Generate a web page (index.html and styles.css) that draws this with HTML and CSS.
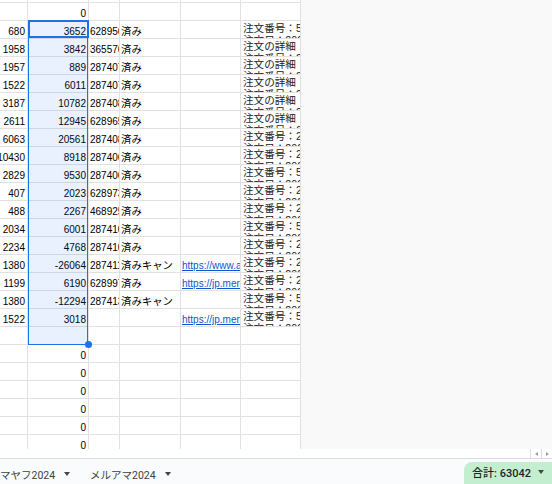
FILE: index.html
```html
<!DOCTYPE html>
<html lang="ja">
<head>
<meta charset="utf-8">
<title>Sheet</title>
<link rel="stylesheet" href="styles.css">
</head>
<body>
<div class="app">
  <div class="sheet">
    <div class="grid">
      <div class="row top"><div class="c"></div><div class="c"></div><div class="c"></div><div class="c"></div><div class="c"></div><div class="c"></div></div>
      <div class="row"><div class="c n"></div><div class="c n">0</div><div class="c"></div><div class="c"></div><div class="c"></div><div class="c"></div></div>
      <div class="row"><div class="c n">680</div><div class="c n">3652</div><div class="c t">6289560184</div><div class="c t j">済み</div><div class="c"></div><div class="c w">注文番号：5102<br>注文日：2024/01</div></div>
      <div class="row"><div class="c n">1958</div><div class="c n">3842</div><div class="c t">3655761203</div><div class="c t j">済み</div><div class="c"></div><div class="c w">注文の詳細<br>注文番号：2874</div></div>
      <div class="row"><div class="c n">1957</div><div class="c n">889</div><div class="c t">2874071156</div><div class="c t j">済み</div><div class="c"></div><div class="c w">注文の詳細<br>注文番号：2874</div></div>
      <div class="row"><div class="c n">1522</div><div class="c n">6011</div><div class="c t">2874072290</div><div class="c t j">済み</div><div class="c"></div><div class="c w">注文の詳細<br>注文番号：2874</div></div>
      <div class="row"><div class="c n">3187</div><div class="c n">10782</div><div class="c t">2874083301</div><div class="c t j">済み</div><div class="c"></div><div class="c w">注文の詳細<br>注文番号：2874</div></div>
      <div class="row"><div class="c n">2611</div><div class="c n">12945</div><div class="c t">6289654410</div><div class="c t j">済み</div><div class="c"></div><div class="c w">注文の詳細<br>注文番号：6289</div></div>
      <div class="row"><div class="c n">6063</div><div class="c n">20561</div><div class="c t">2874085512</div><div class="c t j">済み</div><div class="c"></div><div class="c w">注文番号：2874<br>注文日：2024/02</div></div>
      <div class="row"><div class="c n">10430</div><div class="c n">8918</div><div class="c t">2874066623</div><div class="c t j">済み</div><div class="c"></div><div class="c w">注文番号：2874<br>注文日：2024/02</div></div>
      <div class="row"><div class="c n">2829</div><div class="c n">9530</div><div class="c t">2874067734</div><div class="c t j">済み</div><div class="c"></div><div class="c w">注文番号：5102<br>注文日：2024/02</div></div>
      <div class="row"><div class="c n">407</div><div class="c n">2023</div><div class="c t">6289738845</div><div class="c t j">済み</div><div class="c"></div><div class="c w">注文番号：2874<br>注文日：2024/03</div></div>
      <div class="row"><div class="c n">488</div><div class="c n">2267</div><div class="c t">4689259956</div><div class="c t j">済み</div><div class="c"></div><div class="c w">注文番号：2874<br>注文日：2024/03</div></div>
      <div class="row"><div class="c n">2034</div><div class="c n">6001</div><div class="c t">2874101067</div><div class="c t j">済み</div><div class="c"></div><div class="c w">注文番号：5102<br>注文日：2024/03</div></div>
      <div class="row"><div class="c n">2234</div><div class="c n">4768</div><div class="c t">2874102178</div><div class="c t j">済み</div><div class="c"></div><div class="c w">注文番号：2874<br>注文日：2024/04</div></div>
      <div class="row"><div class="c n">1380</div><div class="c n">-26064</div><div class="c t">2874113289</div><div class="c t j wrap">済みキャンセル</div><div class="c t"><span class="link">https://www.amazon.co.jp</span></div><div class="c w">注文番号：2874<br>注文日：2024/04</div></div>
      <div class="row"><div class="c n">1199</div><div class="c n">6190</div><div class="c t">6289974390</div><div class="c t j">済み</div><div class="c t"><span class="link">https://jp.mercari.com</span></div><div class="c w">注文番号：2874<br>注文日：2024/04</div></div>
      <div class="row"><div class="c n">1380</div><div class="c n">-12294</div><div class="c t">2874135401</div><div class="c t j wrap">済みキャンセル</div><div class="c"></div><div class="c w">注文番号：5102<br>注文日：2024/05</div></div>
      <div class="row"><div class="c n">1522</div><div class="c n">3018</div><div class="c"></div><div class="c"></div><div class="c t"><span class="link">https://jp.mercari.com</span></div><div class="c w">注文番号：5102<br>注文日：2024/05</div></div>
      <div class="row"><div class="c"></div><div class="c"></div><div class="c"></div><div class="c"></div><div class="c"></div><div class="c"></div></div>
      <div class="row"><div class="c"></div><div class="c n">0</div><div class="c"></div><div class="c"></div><div class="c"></div><div class="c"></div></div>
      <div class="row"><div class="c"></div><div class="c n">0</div><div class="c"></div><div class="c"></div><div class="c"></div><div class="c"></div></div>
      <div class="row"><div class="c"></div><div class="c n">0</div><div class="c"></div><div class="c"></div><div class="c"></div><div class="c"></div></div>
      <div class="row"><div class="c"></div><div class="c n">0</div><div class="c"></div><div class="c"></div><div class="c"></div><div class="c"></div></div>
      <div class="row"><div class="c"></div><div class="c n">0</div><div class="c"></div><div class="c"></div><div class="c"></div><div class="c"></div></div>
      <div class="row"><div class="c"></div><div class="c n">0</div><div class="c"></div><div class="c"></div><div class="c"></div><div class="c"></div></div>
      <div class="sel"></div>
      <div class="active"></div>
      <div class="handle"></div>
    </div>
    <div class="blank"></div>
  </div>
  <div class="hscroll">
    <div class="arrows">
      <span class="arr left"></span>
      <span class="arr right"></span>
    </div>
  </div>
  <div class="tabbar">
    <div class="tab first">マヤフ2024<span class="caret"></span></div>
    <div class="tab">メルアマ2024<span class="caret"></span></div>
    <div class="chip">合計: 63042<span class="caret"></span></div>
  </div>
</div>
</body>
</html>
```

FILE: styles.css
```css
* { box-sizing: border-box; }
html, body {
  margin: 0;
  padding: 0;
  width: 552px;
  height: 484px;
  overflow: hidden;
  background: #fff;
}
body {
  font-family: "Liberation Sans", Arial, "Noto Sans CJK JP", sans-serif;
  font-size: 10px;
  color: #000;
}
.app {
  display: flex;
  flex-direction: column;
  width: 552px;
  height: 484px;
}
.sheet {
  display: flex;
  height: 449px;
  flex: none;
  overflow: hidden;
}
.grid {
  position: relative;
  width: 300px;
  flex: none;
}
.row {
  display: grid;
  grid-template-columns: 28px 61px 31px 61px 60px 60px;
  height: 18px;
}
.row.top { height: 3px; }
.c {
  border-right: 1px solid #e1e1e1;
  border-bottom: 1px solid #e1e1e1;
  overflow: hidden;
  white-space: nowrap;
  line-height: 16px;
}
.n {
  display: flex;
  justify-content: flex-end;
  padding: 3px 2px 0 0;
}
.t {
  padding: 3px 0 0 1px;
}
.j {
  font-size: 10.4px;
}
.wrap {
  white-space: normal;
  word-break: break-all;
}
.w {
  white-space: nowrap;
  font-size: 10.6px;
  line-height: 11.5px;
  padding: 2px 0 0 2px;
  color: #222;
}
.link {
  color: #1155cc;
  text-decoration: underline;
}
.sel {
  position: absolute;
  left: 28px;
  top: 20px;
  width: 60px;
  height: 325px;
  border: 1px solid #1a73e8;
  background: rgba(26, 115, 232, 0.1);
}
.active {
  position: absolute;
  left: 28px;
  top: 20px;
  width: 61px;
  height: 18px;
  border: 2px solid #1a73e8;
}
.handle {
  position: absolute;
  left: 85px;
  top: 341px;
  width: 7px;
  height: 7px;
  border-radius: 50%;
  background: #1a73e8;
}
.blank {
  flex: 1;
  background: #f8f9f8;
}
.hscroll {
  height: 9px;
  flex: none;
  display: flex;
  justify-content: flex-end;
  background: #fff;
}
.arrows {
  display: flex;
  width: 22px;
  height: 9px;
}
.arr {
  width: 11px;
  height: 9px;
  border-left: 1px solid #dadce0;
  display: flex;
  align-items: center;
  justify-content: center;
}
.arr::after {
  content: "";
  width: 0;
  height: 0;
  border-top: 2.5px solid transparent;
  border-bottom: 2.5px solid transparent;
}
.arr.left::after { border-right: 3px solid #9aa0a6; }
.arr.right::after { border-left: 3px solid #9aa0a6; }
.tabbar {
  flex: none;
  height: 30px;
  border-top: 1px solid #dadce0;
  background: #f9fbfd;
  display: flex;
  align-items: flex-start;
  font-family: Roboto, "Noto Sans CJK JP", sans-serif;
  font-size: 10.5px;
  color: #3c4043;
}
.tab {
  display: flex;
  align-items: center;
  height: 30px;
  gap: 9px;
}
.tab.first { width: 90px; }
.caret {
  display: inline-block;
  width: 0;
  height: 0;
  border-left: 3.5px solid transparent;
  border-right: 3.5px solid transparent;
  border-top: 4px solid #444746;
}
.chip {
  margin-left: auto;
  margin-top: 3px;
  margin-right: -14px;
  height: 26px;
  padding: 0 22px 6px 8px;
  display: flex;
  align-items: center;
  gap: 7px;
  background: #c4eed0;
  border-radius: 8px 8px 0 0;
  font-size: 11px;
  font-weight: 500;
  color: #1f1f1f;
}
```
